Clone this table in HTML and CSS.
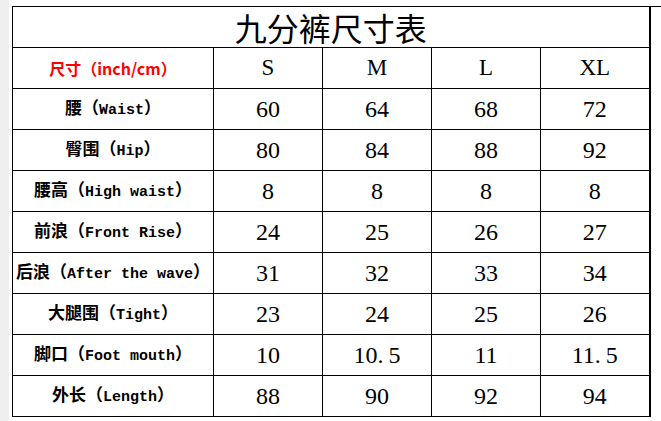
FILE: index.html
```html
<!DOCTYPE html>
<html lang="zh">
<head>
<meta charset="utf-8">
<title>九分裤尺寸表</title>
<link rel="stylesheet" href="styles.css">
</head>
<body>
<div class="page">
  <div class="gutter"></div>
  <div class="sheet">
    <table class="size-table">
      <colgroup>
        <col class="c-label"><col class="c-size"><col class="c-size"><col class="c-size"><col class="c-size">
      </colgroup>
      <tr class="title-row"><td class="title" colspan="5">九分裤尺寸表</td></tr>
      <tr class="head">
        <td class="unit">尺寸（inch/cm）</td>
        <td>S</td><td>M</td><td>L</td><td>XL</td>
      </tr>
      <tr><td class="label">腰（<span class="en">Waist</span>）</td><td>60</td><td>64</td><td>68</td><td>72</td></tr>
      <tr><td class="label">臀围（<span class="en">Hip</span>）</td><td>80</td><td>84</td><td>88</td><td>92</td></tr>
      <tr><td class="label">腰高（<span class="en">High waist</span>）</td><td>8</td><td>8</td><td>8</td><td>8</td></tr>
      <tr><td class="label">前浪（<span class="en">Front Rise</span>）</td><td>24</td><td>25</td><td>26</td><td>27</td></tr>
      <tr><td class="label">后浪（<span class="en">After the wave</span>）</td><td>31</td><td>32</td><td>33</td><td>34</td></tr>
      <tr><td class="label">大腿围（<span class="en">Tight</span>）</td><td>23</td><td>24</td><td>25</td><td>26</td></tr>
      <tr><td class="label">脚口（<span class="en">Foot mouth</span>）</td><td>10</td><td>10<span class="dot">.</span>5</td><td>11</td><td>11<span class="dot">.</span>5</td></tr>
      <tr><td class="label">外长（<span class="en">Length</span>）</td><td>88</td><td>90</td><td>92</td><td>94</td></tr>
    </table>
  </div>
</div>
</body>
</html>
```

FILE: styles.css
```css
html, body {
  margin: 0;
  padding: 0;
  background: #ffffff;
}

.page {
  display: flex;
  width: 661px;
  height: 421px;
  overflow: hidden;
}

.gutter {
  width: 9px;
  flex: none;
  background: #efefef;
}

.sheet {
  flex: 1;
  margin: 6px 0 0 3px;
  border-top: 1px solid #000;
}

.size-table {
  border-collapse: collapse;
  table-layout: fixed;
  width: 638px;
  font-family: "Liberation Serif", "Noto Sans CJK SC", serif;
  color: #000;
}

.c-label { width: 201px; }
.c-size { width: 109px; }

.size-table tr {
  height: 41px;
}

.size-table tr.title-row {
  height: 40px;
}

.size-table td {
  border: 1px solid #000;
  padding: 0;
  text-align: center;
  vertical-align: middle;
  font-size: 24px;
  line-height: 24px;
}

.size-table tr td:last-child {
  border-right-width: 2px;
}

.size-table td.title {
  border-top: 0;
  font-family: "Noto Sans CJK SC", sans-serif;
  font-size: 32px;
  font-weight: 400;
  line-height: 36px;
}

.size-table .head td {
  font-size: 23px;
}

.size-table td.unit {
  font-family: "Noto Sans CJK SC", sans-serif;
  font-size: 16px;
  font-weight: 700;
  color: #ff0000;
}

.size-table td.label {
  font-family: "Noto Sans CJK SC", sans-serif;
  font-size: 17px;
  font-weight: 700;
  line-height: 20px;
  white-space: nowrap;
}

.label .en {
  font-family: "Liberation Mono", monospace;
  font-size: 15px;
  font-weight: 700;
}

.dot {
  margin-right: 5px;
}
```
